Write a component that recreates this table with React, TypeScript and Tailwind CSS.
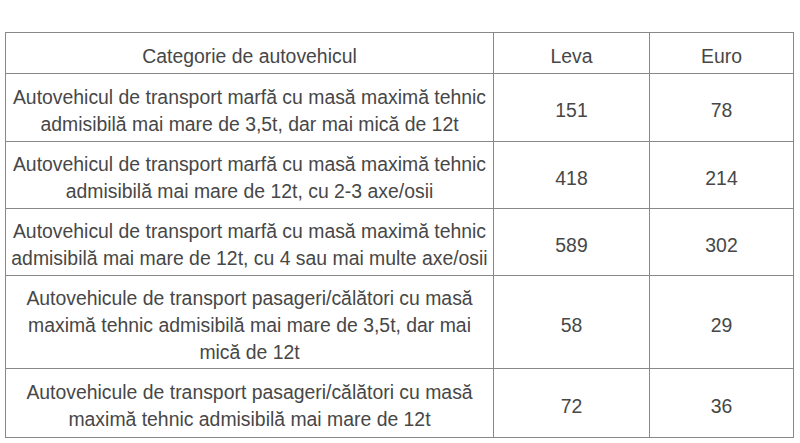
const rows = [
  {
    cat: "Autovehicul de transport marfă cu masă maximă tehnic admisibilă mai mare de 3,5t, dar mai mică de 12t",
    leva: "151",
    euro: "78",
    h: "h-[68px]",
  },
  {
    cat: "Autovehicul de transport marfă cu masă maximă tehnic admisibilă mai mare de 12t, cu 2-3 axe/osii",
    leva: "418",
    euro: "214",
    h: "h-[67px]",
  },
  {
    cat: "Autovehicul de transport marfă cu masă maximă tehnic admisibilă mai mare de 12t, cu 4 sau mai multe axe/osii",
    leva: "589",
    euro: "302",
    h: "h-[67px]",
  },
  {
    cat: "Autovehicule de transport pasageri/călători cu masă maximă tehnic admisibilă mai mare de 3,5t, dar mai mică de 12t",
    leva: "58",
    euro: "29",
    h: "h-[93px]",
  },
  {
    cat: "Autovehicule de transport pasageri/călători cu masă maximă tehnic admisibilă mai mare de 12t",
    leva: "72",
    euro: "36",
    h: "h-[69px]",
  },
];

const App = () => {
  return (
    <div className="w-[800px] h-[443px] bg-white pt-[32px] pl-[5px] font-['Liberation_Sans',Arial,sans-serif] text-[19.4px] leading-[27px] text-[#474747]">
      <table className="w-[788px] border-collapse table-fixed">
        <colgroup>
          <col className="w-[488px]" />
          <col className="w-[156px]" />
          <col className="w-[144px]" />
        </colgroup>
        <thead>
          <tr className="h-[41px]">
            <th className="border border-[#888] font-normal px-1 pt-[6px]">Categorie de autovehicul</th>
            <th className="border border-[#888] font-normal px-1 pt-[6px]">Leva</th>
            <th className="border border-[#888] font-normal px-1 pt-[6px]">Euro</th>
          </tr>
        </thead>
        <tbody>
          {rows.map((r) => (
            <tr key={r.leva} className={r.h}>
              <td className="border border-[#888] text-center px-[4px] pt-[6px]">{r.cat}</td>
              <td className="border border-[#888] text-center pt-[6px]">{r.leva}</td>
              <td className="border border-[#888] text-center pt-[6px]">{r.euro}</td>
            </tr>
          ))}
        </tbody>
      </table>
    </div>
  );
};

export default App;
